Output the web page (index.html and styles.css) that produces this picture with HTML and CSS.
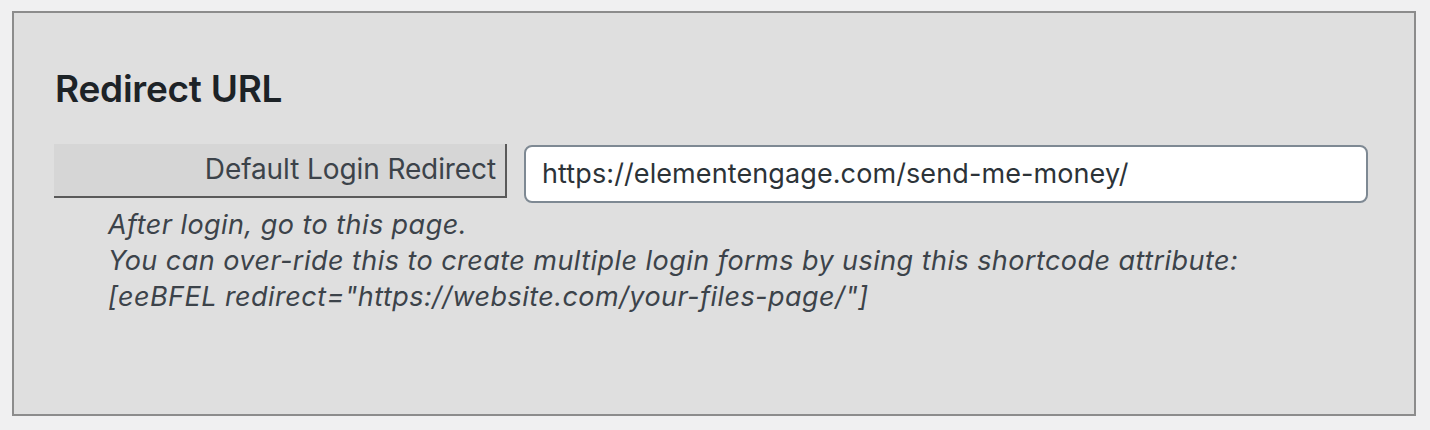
FILE: index.html
```html
<!DOCTYPE html>
<html>
<head>
<meta charset="utf-8">
<link rel="stylesheet" href="styles.css">
</head>
<body>
<div class="panel">
  <h2 class="title">Redirect URL</h2>
  <div class="row">
    <div class="label">Default Login Redirect</div>
    <div class="input">https://elementengage.com/send-me-money/</div>
  </div>
  <p class="desc">After login, go to this page.<br>You can over-ride this to create multiple login forms by using this shortcode attribute:<br>[eeBFEL redirect="https://website.com/your-files-page/"]</p>
</div>
</body>
</html>
```

FILE: styles.css
```css
html, body {
  margin: 0;
  padding: 0;
}
body {
  background: #f0f0f1;
  font-family: Inter, "Noto Sans", sans-serif;
  padding: 11px 14px 14px 12px;
  width: 1404px;
}
.panel {
  box-sizing: border-box;
  height: 405px;
  border: 2px solid #8c8c8c;
  background: #dfdfdf;
  padding: 0 0 0 40px;
  display: flex;
  flex-direction: column;
}
.title {
  margin: 56px 0 0 1px;
  font-size: 37px;
  line-height: 40px;
  font-weight: 600;
  color: #1d2327;
  letter-spacing: -0.25px;
}
.row {
  display: flex;
  align-items: flex-start;
  gap: 17px;
  margin-top: 35px;
}
.label {
  box-sizing: border-box;
  width: 453px;
  height: 54px;
  background: #d6d6d6;
  border-right: 2px solid #5a5a5a;
  border-bottom: 2px solid #5a5a5a;
  color: #3c434a;
  font-size: 28px;
  line-height: 50px;
  text-align: right;
  padding-right: 9px;
  letter-spacing: -0.1px;
}
.input {
  box-sizing: border-box;
  width: 844px;
  height: 58px;
  margin-top: 1px;
  background: #fff;
  border: 2px solid #7e8993;
  border-radius: 8px;
  color: #2c3338;
  font-size: 27px;
  line-height: 54px;
  padding-left: 16px;
  letter-spacing: 0.1px;
}
.desc {
  margin: 4px 0 0 54px;
  font-style: italic;
  font-size: 27px;
  line-height: 36px;
  letter-spacing: 0.45px;
  color: #3c434a;
}
```
